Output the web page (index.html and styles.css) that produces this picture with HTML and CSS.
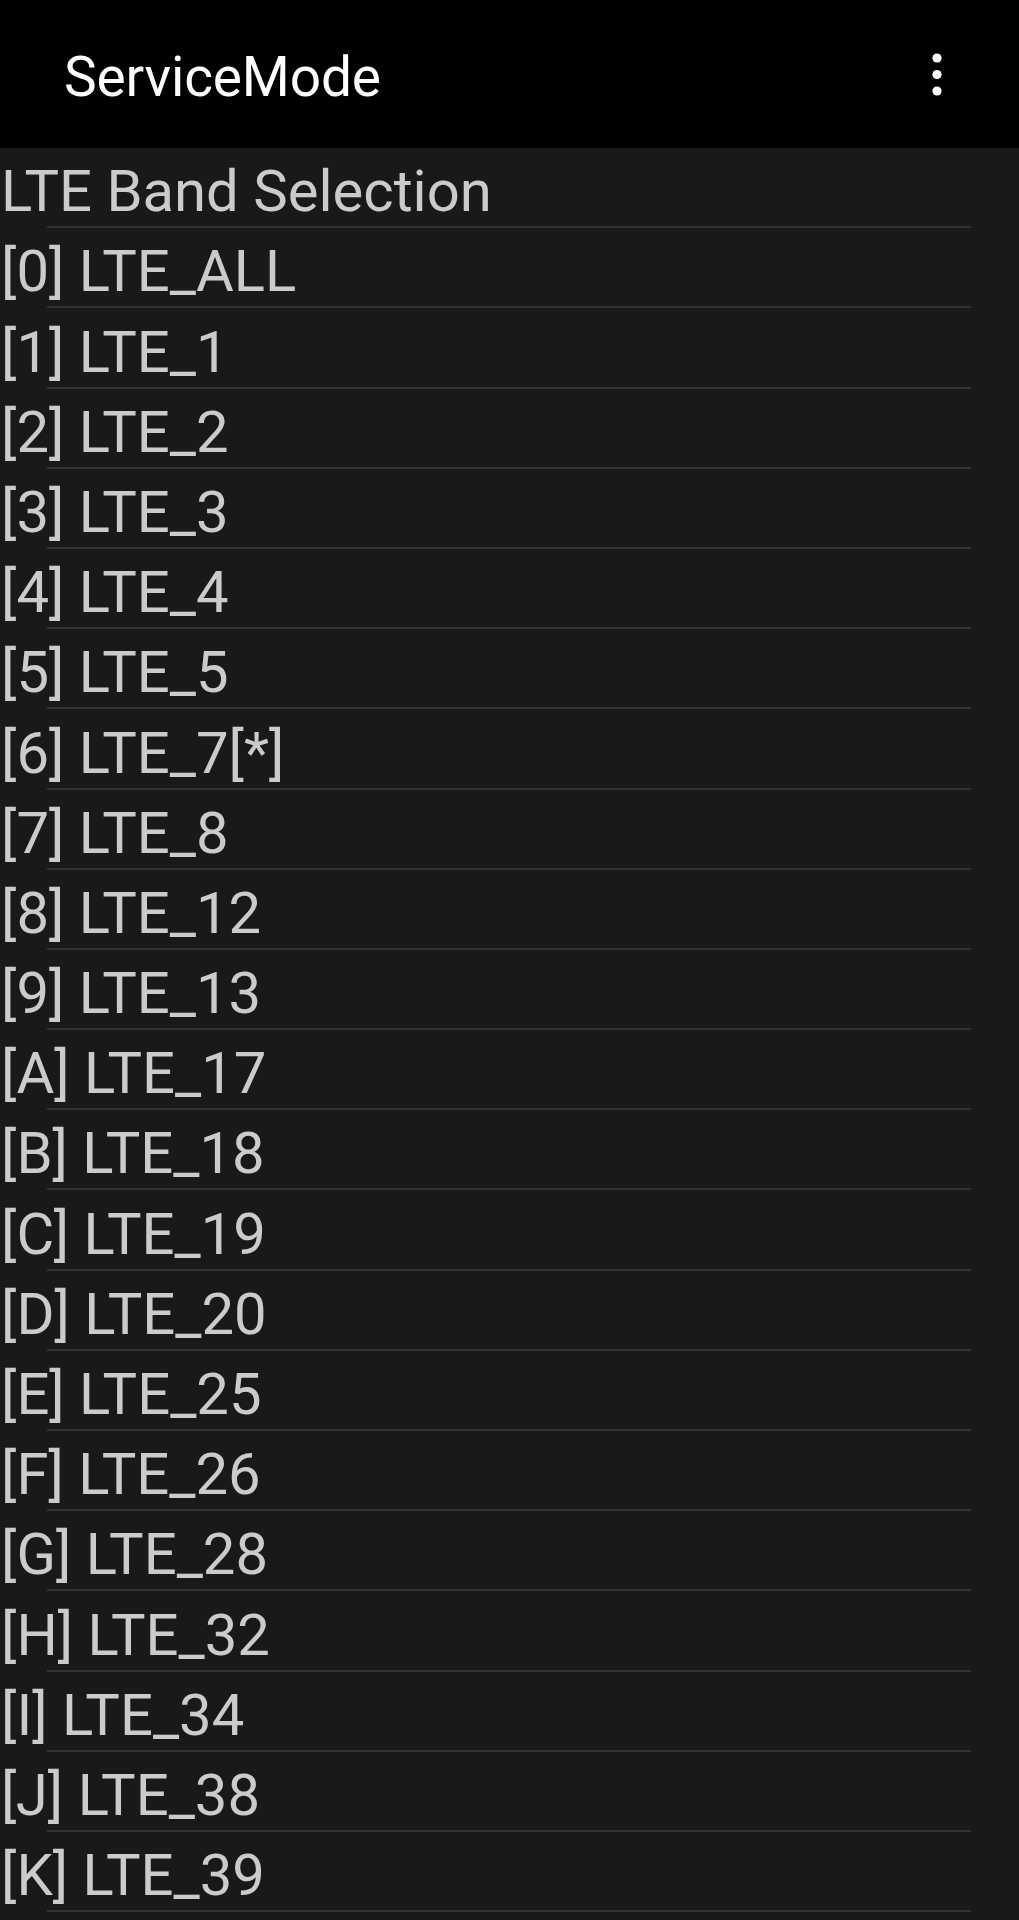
FILE: index.html
```html
<!DOCTYPE html>
<html lang="en">
  <head>
    <meta charset="UTF-8" />
    <meta name="viewport" content="width=device-width, initial-scale=1.0" />
    <title>ServiceMode</title>
    <link rel="stylesheet" href="styles.css">
  </head>
  <body>
    <header class="app-bar">
      <h1 class="app-title">ServiceMode</h1>
      <svg class="menu-icon" width="10" height="44" viewBox="0 0 10 44">
        <circle cx="5" cy="5" r="4.6" fill="#fff" />
        <circle cx="5" cy="21.5" r="4.6" fill="#fff" />
        <circle cx="5" cy="38" r="4.6" fill="#fff" />
      </svg>
    </header>
    <ul class="band-list">
      <li class="band-row">LTE Band Selection</li>
      <li class="band-row">[0] LTE_ALL</li>
      <li class="band-row">[1] LTE_1</li>
      <li class="band-row">[2] LTE_2</li>
      <li class="band-row">[3] LTE_3</li>
      <li class="band-row">[4] LTE_4</li>
      <li class="band-row">[5] LTE_5</li>
      <li class="band-row">[6] LTE_7[*]</li>
      <li class="band-row">[7] LTE_8</li>
      <li class="band-row">[8] LTE_12</li>
      <li class="band-row">[9] LTE_13</li>
      <li class="band-row">[A] LTE_17</li>
      <li class="band-row">[B] LTE_18</li>
      <li class="band-row">[C] LTE_19</li>
      <li class="band-row">[D] LTE_20</li>
      <li class="band-row">[E] LTE_25</li>
      <li class="band-row">[F] LTE_26</li>
      <li class="band-row">[G] LTE_28</li>
      <li class="band-row">[H] LTE_32</li>
      <li class="band-row">[I] LTE_34</li>
      <li class="band-row">[J] LTE_38</li>
      <li class="band-row">[K] LTE_39</li>
    </ul>
  </body>
</html>
```

FILE: styles.css
```css
/* base */
html {
  background-color: #191919;
}
body {
  margin: 0;
  padding: 0;
  font-family: Roboto, "Noto Sans", sans-serif;
  background-color: #191919;
  overflow: hidden;
}

/* top bar */
.app-bar {
  height: 148px;
  background-color: #000;
  display: flex;
  align-items: center;
  justify-content: space-between;
  padding: 0 77px 0 64px;
}
.app-title {
  margin: 6px 0 0 0;
  font-size: 55px;
  font-weight: 400;
  line-height: 1;
  color: #fff;
  letter-spacing: -0.15px;
}
.menu-icon {
  display: block;
  margin-top: 1px;
}

/* list of bands */
.band-list {
  list-style: none;
  margin: 0;
  padding: 0;
}
.band-row {
  padding: 9.2px 0 2px 1px;
  line-height: 69px;
  height: 69px;
  font-size: 58px;
  color: #cbcbcb;
  white-space: nowrap;
  /* separator is inset on both sides */
  background: linear-gradient(#323232, #323232) no-repeat 47px 100% / 924px 2px;
}
```
